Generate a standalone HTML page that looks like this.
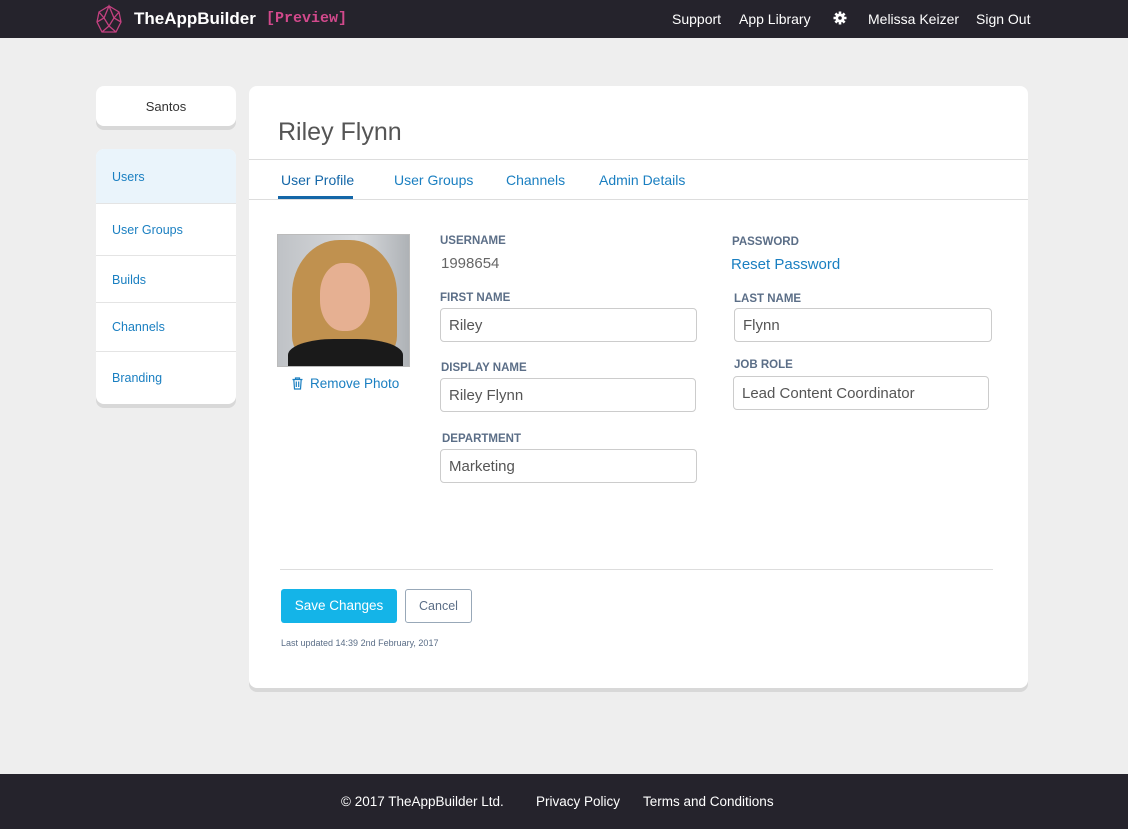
<!DOCTYPE html>
<html><head><meta charset="utf-8"><style>
*{box-sizing:border-box;margin:0;padding:0}
body{width:1128px;height:829px;background:#eeeeee;font-family:"Liberation Sans",sans-serif;position:relative;overflow:hidden}
.top{position:absolute;left:0;top:0;width:1128px;height:38px;background:#25232c;color:#fff}
.top .nav{position:absolute;top:11px;font-size:14px}
.foot{position:absolute;left:0;top:774px;width:1128px;height:55px;background:#25232c;color:#fff;font-size:13.5px}
.foot span{position:absolute;top:20px}
.side{position:absolute;left:96px;background:#fff;border-radius:8px;box-shadow:0 4px 0 #d8d8d8}
.side a{display:block;color:#1a7fc1;font-size:12.5px;padding-left:16px;border-bottom:1px solid #e4e4e4;text-decoration:none}
.card{position:absolute;left:249px;top:86px;width:779px;height:602px;background:#fff;border-radius:8px;box-shadow:0 4px 0 #d8d8d8}
.lbl{position:absolute;font-size:11.5px;font-weight:bold;color:#5b6e87;margin-top:2px}
.inp{position:absolute;height:34px;border:1px solid #ccc;border-radius:4px;font-size:15px;color:#555;padding:8px 0 0 8px}
.tab{position:absolute;top:86px;font-size:14px;color:#1a7fc1}
</style></head><body>
<div class="top">
<svg style="position:absolute;left:94px;top:4px" width="30" height="30" viewBox="0 0 30 30" fill="none" stroke="#c2407f" stroke-width="1.3"><path d="M15 2 L5 8 L3 18 L8 28 L22 28 L27 18 L25 8 Z M15 2 L10 14 L15 22 L20 14 Z M5 8 L10 14 L3 18 M25 8 L20 14 L27 18 M8 28 L15 22 L22 28"/></svg>
<span style="position:absolute;left:134px;top:9px;font-size:17px;font-weight:bold">TheAppBuilder</span>
<span style="position:absolute;left:266px;top:10px;font-size:15px;font-weight:bold;color:#d2498c;font-family:'Liberation Mono',monospace">[Preview]</span>
<span class="nav" style="left:672px">Support</span>
<span class="nav" style="left:739px">App Library</span>
<svg style="position:absolute;left:833px;top:11px" width="14" height="14" viewBox="0 0 14 14"><circle cx="7" cy="7" r="4.5" fill="#fff"/><g stroke="#fff" stroke-width="2.6"><path d="M7 0.5V13.5M0.5 7H13.5M2.4 2.4L11.6 11.6M11.6 2.4L2.4 11.6"/></g><circle cx="7" cy="7" r="1.8" fill="#25232c"/></svg>
<span class="nav" style="left:868px">Melissa Keizer</span>
<span class="nav" style="left:976px">Sign Out</span>
</div>
<div class="side" style="top:86px;width:140px;height:40px;text-align:center;font-size:13px;color:#333;padding-top:13px">Santos</div>
<div class="side" style="top:149px;width:140px;height:255px;overflow:hidden">
<a style="height:55px;line-height:57px;background:#eaf4fb">Users</a>
<a style="height:52px;line-height:52px">User Groups</a>
<a style="height:47px;line-height:49px">Builds</a>
<a style="height:49px;line-height:49px">Channels</a>
<a style="height:52px;line-height:52px;border:0">Branding</a>
</div>
<div class="card">
<div style="position:absolute;left:29px;top:32px;font-size:25px;color:#555">Riley Flynn</div>
<div style="position:absolute;left:0;top:73px;width:779px;border-top:1px solid #ddd"></div>
<div style="position:absolute;left:0;top:113px;width:779px;border-top:1px solid #ddd"></div>
<span class="tab" style="left:32px;color:#1467a8">User Profile</span>
<div style="position:absolute;left:29px;top:110px;width:75px;height:3px;background:#1467a8"></div>
<span class="tab" style="left:145px">User Groups</span>
<span class="tab" style="left:257px">Channels</span>
<span class="tab" style="left:350px">Admin Details</span>
<div style="position:absolute;left:28px;top:148px;width:133px;height:133px;border:1px solid #bbb;overflow:hidden;background:linear-gradient(90deg,#bfc2c6,#d8dadd 60%,#aeb2b6)">
<div style="position:absolute;left:14px;top:5px;width:105px;height:120px;border-radius:45% 45% 20% 20%;background:#c0914f"></div>
<div style="position:absolute;left:42px;top:28px;width:50px;height:68px;border-radius:45%;background:#e6b092"></div>
<div style="position:absolute;left:10px;top:104px;width:115px;height:40px;border-radius:40% 40% 0 0;background:#1a1a1a"></div>
</div>
<svg style="position:absolute;left:43px;top:291px" width="11" height="13" viewBox="0 0 11 13" fill="none" stroke="#1a7fc1" stroke-width="1.2"><path d="M0.5 2.5H10.5M3.5 2.5V1H7.5V2.5M1.8 2.5L2.5 12H8.5L9.2 2.5M4.3 4.5V10M6.7 4.5V10"/></svg>
<div style="position:absolute;left:61px;top:290px;font-size:13.5px;color:#1a7fc1">Remove Photo</div>
<div class="lbl" style="left:191px;top:147px">USERNAME</div>
<div style="position:absolute;left:192px;top:169px;font-size:15px;color:#666">1998654</div>
<div class="lbl" style="left:191px;top:204px">FIRST NAME</div>
<div class="inp" style="left:191px;top:222px;width:257px">Riley</div>
<div class="lbl" style="left:192px;top:274px">DISPLAY NAME</div>
<div class="inp" style="left:191px;top:292px;width:256px">Riley Flynn</div>
<div class="lbl" style="left:193px;top:345px">DEPARTMENT</div>
<div class="inp" style="left:191px;top:363px;width:257px">Marketing</div>
<div class="lbl" style="left:483px;top:148px">PASSWORD</div>
<div style="position:absolute;left:482px;top:170px;font-size:15px;color:#1a7fc1">Reset Password</div>
<div class="lbl" style="left:485px;top:205px">LAST NAME</div>
<div class="inp" style="left:485px;top:222px;width:258px">Flynn</div>
<div class="lbl" style="left:485px;top:271px">JOB ROLE</div>
<div class="inp" style="left:484px;top:290px;width:256px">Lead Content Coordinator</div>
<div style="position:absolute;left:31px;top:483px;width:713px;border-top:1px solid #ddd"></div>
<div style="position:absolute;left:32px;top:503px;width:116px;height:34px;background:#14b4e8;border-radius:3px;color:#fff;font-size:13.5px;text-align:center;line-height:34px">Save Changes</div>
<div style="position:absolute;left:156px;top:503px;width:67px;height:34px;border:1px solid #98a8b8;border-radius:3px;color:#5b6e87;font-size:12.5px;text-align:center;line-height:32px">Cancel</div>
<div style="position:absolute;left:32px;top:552px;font-size:9px;color:#5b6e87">Last updated 14:39 2nd February, 2017</div>
</div>
<div class="foot"><span style="left:341px">© 2017 TheAppBuilder Ltd.</span><span style="left:536px">Privacy Policy</span><span style="left:643px">Terms and Conditions</span></div>
</body></html>
